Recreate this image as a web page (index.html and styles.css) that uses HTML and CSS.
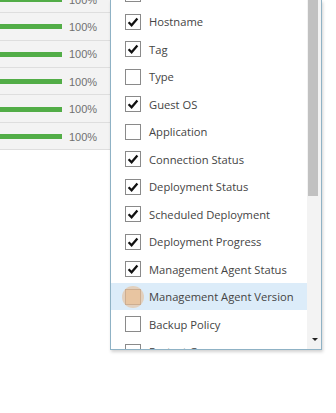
FILE: index.html
```html
<!DOCTYPE html>
<html lang="en">
<head>
    <meta charset="UTF-8">
    <meta name="viewport" content="width=device-width, initial-scale=1.0">
    <title>Columns</title>
    <link rel="stylesheet" href="styles.css">
</head>
<body>
    <div class="grid">
        <div class="grid-row"><span class="bar"></span><span class="pct">100%</span></div>
        <div class="grid-row"><span class="bar"></span><span class="pct">100%</span></div>
        <div class="grid-row"><span class="bar"></span><span class="pct">100%</span></div>
        <div class="grid-row"><span class="bar"></span><span class="pct">100%</span></div>
        <div class="grid-row"><span class="bar"></span><span class="pct">100%</span></div>
        <div class="grid-row"><span class="bar"></span><span class="pct">100%</span></div>
    </div>

    <div class="column-menu">
        <ul class="options">
            <li><span class="box"></span><span class="label">Name</span></li>
            <li><span class="box checked"></span><span class="label">Hostname</span></li>
            <li><span class="box checked"></span><span class="label">Tag</span></li>
            <li><span class="box"></span><span class="label">Type</span></li>
            <li><span class="box checked"></span><span class="label">Guest OS</span></li>
            <li><span class="box"></span><span class="label">Application</span></li>
            <li><span class="box checked"></span><span class="label">Connection Status</span></li>
            <li><span class="box checked"></span><span class="label">Deployment Status</span></li>
            <li><span class="box checked"></span><span class="label">Scheduled Deployment</span></li>
            <li><span class="box checked"></span><span class="label">Deployment Progress</span></li>
            <li><span class="box checked"></span><span class="label">Management Agent Status</span></li>
            <li class="hover"><span class="box"></span><span class="label">Management Agent Version</span></li>
            <li><span class="box"></span><span class="label">Backup Policy</span></li>
            <li><span class="box"></span><span class="label">Protect Group</span></li>
        </ul>
        <div class="scrollbar">
            <div class="thumb"></div>
            <span class="arrow"></span>
        </div>
    </div>

    <script>
        // draw the tick in every checked box
        document.querySelectorAll('.box.checked').forEach(function (box) {
            box.innerHTML = '<svg width="14" height="14" viewBox="0 0 14 14"><path d="M2.6 7.2 L5.6 10.2 L11.4 3.6" fill="none" stroke="#111" stroke-width="2.3"/></svg>';
        });
    </script>
</body>
</html>
```

FILE: styles.css
```css
body {
    margin: 0;
    background: #fff;
    font-family: 'Open Sans', sans-serif;
    overflow: hidden;
    height: 413px;
    position: relative;
}

.grid {
    width: 110px;
    margin-top: -14.1px;
    background: #f3f3f3;
}

.grid-row {
    height: 27.4px;
    box-sizing: border-box;
    border-bottom: 1px solid #dedede;
    display: flex;
    align-items: center;
    padding-top: 1px;
}

.bar {
    width: 62px;
    height: 5px;
    background: #52ad47;
}

.pct {
    margin-left: 7px;
    font-family: 'Liberation Sans', Arial, sans-serif;
    font-size: 11px;
    color: #707070;
}

.column-menu {
    position: absolute;
    left: 110px;
    top: 0;
    width: 210px;
    height: 349px;
    background: #fff;
    border: 1px solid #8fb2c5;
    border-top: none;
    box-shadow: 1px 2px 3px rgba(0,0,0,0.18);
    display: flex;
    overflow: hidden;
}

.options {
    list-style: none;
    margin: -19.75px 0 0 0;
    padding: 0;
    width: 196px;
}

.options li {
    height: 27.5px;
    display: flex;
    align-items: center;
    padding-left: 14px;
    gap: 8px;
    position: relative;
}

.options li.hover {
    background: #dcecf9;
}

.box {
    width: 14px;
    height: 14px;
    border: 1px solid #8a8a8a;
    background: #fff;
    display: flex;
    align-items: center;
    justify-content: center;
    flex-shrink: 0;
}

.hover .box {
    background: #ecd0b2;
    border-color: #a8978a;
}

/* touch highlight over the hovered checkbox */
.hover::before {
    content: "";
    position: absolute;
    left: 11px;
    top: 2.75px;
    width: 22px;
    height: 22px;
    border-radius: 50%;
    background: rgba(230, 190, 150, 0.6);
}

.label {
    font-size: 11.2px;
    color: #444;
    white-space: nowrap;
}

.scrollbar {
    width: 14px;
    background: #f3f3f3;
    position: relative;
}

.thumb {
    margin-left: 1px;
    width: 10px;
    height: 196px;
    background: #c1c1c1;
}

.arrow {
    position: absolute;
    left: 5px;
    bottom: 8px;
    border-left: 3px solid transparent;
    border-right: 3px solid transparent;
    border-top: 3px solid #222;
}
```
